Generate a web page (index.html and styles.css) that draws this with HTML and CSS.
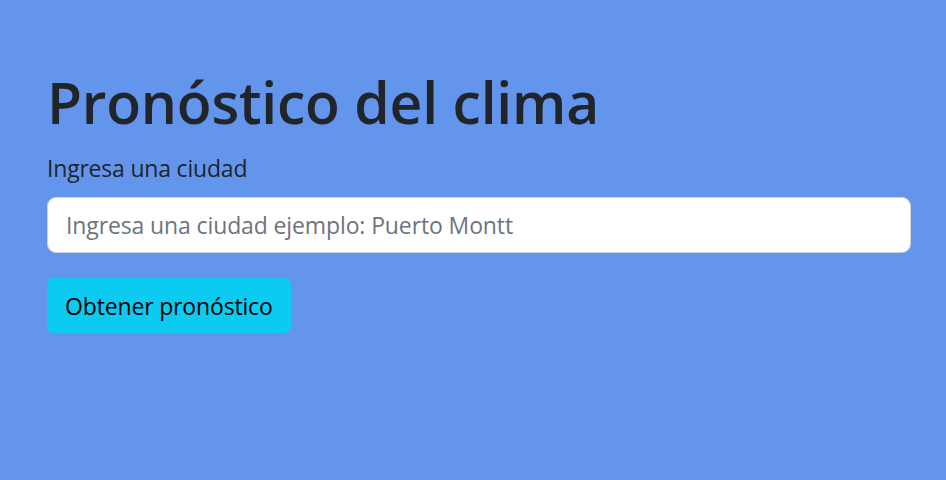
FILE: index.html
```html
<!DOCTYPE html>
<html lang="es">
<head>
<meta charset="utf-8">
<title>Pronóstico del clima</title>
<link rel="stylesheet" href="styles.css">
</head>
<body>
<main class="page">
  <h1 class="title">Pronóstico del clima</h1>
  <form class="form">
    <label class="label" for="city">Ingresa una ciudad</label>
    <input class="input" id="city" type="text" placeholder="Ingresa una ciudad ejemplo: Puerto Montt">
    <button class="btn" type="button">Obtener pronóstico</button>
  </form>
</main>
</body>
</html>
```
FILE: styles.css
```css
* { box-sizing: border-box; }
html, body { margin: 0; height: 100%; }
body {
  background: #6495ed;
  font-family: "Open Sans", "Noto Sans", sans-serif;
  color: #212529;
}
.page {
  padding: 66px 35px 0 47px;
}
.title {
  margin: 0 0 12px;
  font-size: 57px;
  letter-spacing: -0.2px;
  font-weight: 600;
  line-height: 72px;
}
.form {
  display: flex;
  flex-direction: column;
  align-items: flex-start;
}
.label {
  font-size: 23px;
  letter-spacing: -0.2px;
  line-height: 36px;
  margin-bottom: 11px;
}
.input {
  width: 100%;
  height: 56px;
  border: 1.5px solid #ced4da;
  border-radius: 9px;
  background: #fff;
  padding: 0 18px;
  font-family: inherit;
  font-size: 23px;
  letter-spacing: -0.12px;
  color: #212529;
  margin-bottom: 25px;
}
.input::placeholder { color: #6c757d; }
.btn {
  height: 55px;
  padding: 0 18px;
  border: 0;
  border-radius: 6px;
  background: #0dcaf0;
  color: #000;
  font-family: inherit;
  font-size: 23px;
  letter-spacing: -0.16px;
}
```
